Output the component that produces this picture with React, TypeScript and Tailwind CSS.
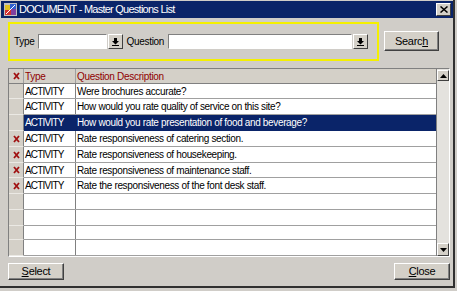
import React from 'react'

const rows = [
  { flag: false, type: 'ACTIVITY', text: 'Were brochures accurate?', h: 'h-[15px]' },
  { flag: false, type: 'ACTIVITY', text: 'How would you rate quality of service on this site?', h: 'h-[16px]' },
  { flag: false, type: 'ACTIVITY', text: 'How would you rate presentation of food and beverage?', h: 'h-[16px]', selected: true },
  { flag: true, type: 'ACTIVITY', text: 'Rate responsiveness of catering section.', h: 'h-[16px]' },
  { flag: true, type: 'ACTIVITY', text: 'Rate responsiveness of housekeeping.', h: 'h-[16px]' },
  { flag: true, type: 'ACTIVITY', text: 'Rate responsiveness of maintenance staff.', h: 'h-[15px]' },
  { flag: true, type: 'ACTIVITY', text: 'Rate the responsiveness of the font desk staff.', h: 'h-[16px]' },
  { flag: false, type: '', text: '', h: 'h-[16px]' },
  { flag: false, type: '', text: '', h: 'h-[16px]' },
  { flag: false, type: '', text: '', h: 'h-[15px]' },
  { flag: false, type: '', text: '', h: 'h-[16px]' },
]

function RedX() {
  return (
    <svg width="7" height="8" viewBox="0 0 7 8">
      <path d="M1 1 L6 7 M6 1 L1 7" stroke="#a01010" strokeWidth="1.8" />
    </svg>
  )
}

function DropButton() {
  return (
    <div className="w-[15px] h-[15px] bg-[#d4d0c8] border border-t-white border-l-white border-r-[#404040] border-b-[#404040] flex items-center justify-center">
      <svg width="7" height="8" viewBox="0 0 7 8">
        <path d="M2 0 H5 V3 H7 L3.5 6.5 L0 3 H2 Z" fill="#000" />
        <path d="M0 7.5 H7" stroke="#000" strokeWidth="1" />
      </svg>
    </div>
  )
}

function Button({ children, className }: { children: React.ReactNode; className?: string }) {
  return (
    <div
      className={`bg-[#d4d0c8] border border-t-white border-l-white border-r-[#404040] border-b-[#404040] shadow-[inset_-1px_-1px_0_#808080] flex items-center justify-center text-[11px] tracking-[-0.3px] text-black ${className ?? ''}`}
    >
      {children}
    </div>
  )
}

export default function App() {
  return (
    <div className="w-[457px] h-[291px] bg-[#d0cdc8] font-['Liberation_Sans',Arial,sans-serif] text-black overflow-hidden">
      <div className="w-[455px] h-[288px] pl-[1px] pt-[1px] border-r-2 border-b-2 border-[#303030] flex flex-col">
        {/* title bar */}
        <div className="h-[17px] bg-[#0a2469] flex items-center pl-[3px] pr-[2px]">
          <svg width="13" height="13" viewBox="0 0 13 13">
            <rect x="0" y="0" width="13" height="13" fill="#c0c0c0" />
            <rect x="1" y="2" width="5" height="5" fill="#e0c020" />
            <rect x="6" y="1" width="6" height="5" fill="#3060d0" />
            <rect x="1" y="7" width="6" height="5" fill="#d03030" />
            <rect x="7" y="6" width="5" height="6" fill="#8040a0" />
            <path d="M2 11 L11 2" stroke="#fff" strokeWidth="1" />
          </svg>
          <span className="ml-[2px] text-[11px] text-white leading-none tracking-[-0.75px]">DOCUMENT - Master Questions List</span>
          <div className="ml-auto w-[15px] h-[13px] bg-[#d4d0c8] border border-t-white border-l-white border-r-[#404040] border-b-[#404040] flex items-center justify-center">
            <svg width="8" height="7" viewBox="0 0 8 7">
              <path d="M0.5 0.5 L7.5 6.5 M7.5 0.5 L0.5 6.5" stroke="#000" strokeWidth="1.5" />
            </svg>
          </div>
        </div>

        {/* search area */}
        <div className="flex items-start mt-[4px] pl-[7px]">
          <div className="w-[371px] h-[39px] border-2 border-[#f4f000] flex items-center pl-[4px] text-[10px] tracking-[-0.3px]">
            <span>Type</span>
            <div className="w-[69px] h-[15px] bg-white border border-t-[#808080] border-l-[#808080] border-r-white border-b-white ml-[4px]" />
            <div className="ml-[1px]">
              <DropButton />
            </div>
            <span className="ml-[3px]">Question</span>
            <div className="w-[184px] h-[15px] bg-white border border-t-[#808080] border-l-[#808080] border-r-white border-b-white ml-[4px]" />
            <div className="ml-[1px]">
              <DropButton />
            </div>
          </div>
          <Button className="w-[55px] h-[20px] ml-[5px] mt-[9px]">
            <span>
              Searc<span className="underline">h</span>
            </span>
          </Button>
        </div>

        {/* grid */}
        <div className="ml-[7px] mt-[7px] w-[442px] h-[189px] flex border border-t-[#808080] border-l-[#808080] border-r-white border-b-white text-[10px]">
          <div className="flex-1 flex flex-col">
            <div className="h-[15px] flex bg-[#d4d0c8] border-b border-[#808080] text-[#900000] tracking-[-0.3px]">
              <div className="w-[15px] flex items-center justify-center border-r border-[#a0a0a0]">
                <RedX />
              </div>
              <div className="w-[52px] pl-[1px] flex items-center border-r border-[#a0a0a0]">Type</div>
              <div className="flex-1 pl-[1px] flex items-center">Question Description</div>
            </div>
            {rows.map((r, i) => (
              <div key={i} className={`${r.h} flex`}>
                <div className="w-[15px] bg-[#d4d0c8] border-r border-[#808080] border-b border-b-[#ebe9e4] flex items-center justify-center">
                  {r.flag && <RedX />}
                </div>
                <div
                  className={`flex-1 flex border-b ${r.selected ? 'bg-[#0a2469] text-white border-[#0a2469]' : 'bg-white border-[#a0a0a0]'}`}
                >
                  <div className={`w-[52px] pl-[1px] flex items-center tracking-[-0.8px] border-r ${r.selected ? 'border-[#0a2469]' : 'border-[#808080]'}`}>
                    {r.type}
                  </div>
                  <div className="flex-1 pl-[1px] flex items-center whitespace-nowrap overflow-hidden tracking-[-0.35px]">
                    {r.text}
                  </div>
                </div>
              </div>
            ))}
          </div>
          {/* scrollbar */}
          <div className="w-[13px] flex flex-col bg-[#e4e2de] border-l border-[#808080]">
            <div className="h-[11px] mt-[1px] bg-[#d4d0c8] border border-t-white border-l-white border-r-[#404040] border-b-[#404040] flex items-center justify-center">
              <svg width="7" height="4" viewBox="0 0 7 4">
                <path d="M3.5 0 L7 4 H0 Z" fill="#000" />
              </svg>
            </div>
            <div className="flex-1" />
            <div className="h-[13px] bg-[#d4d0c8] border border-t-white border-l-white border-r-[#404040] border-b-[#404040] flex items-center justify-center">
              <svg width="7" height="4" viewBox="0 0 7 4">
                <path d="M0 0 H7 L3.5 4 Z" fill="#000" />
              </svg>
            </div>
          </div>
        </div>

        {/* footer buttons */}
        <div className="flex justify-between mt-[6px] pl-[7px] pr-[3px]">
          <Button className="w-[56px] h-[17px]">
            <span>
              <span className="underline">S</span>elect
            </span>
          </Button>
          <Button className="w-[56px] h-[17px]">
            <span>
              <span className="underline">C</span>lose
            </span>
          </Button>
        </div>
      </div>
    </div>
  )
}
